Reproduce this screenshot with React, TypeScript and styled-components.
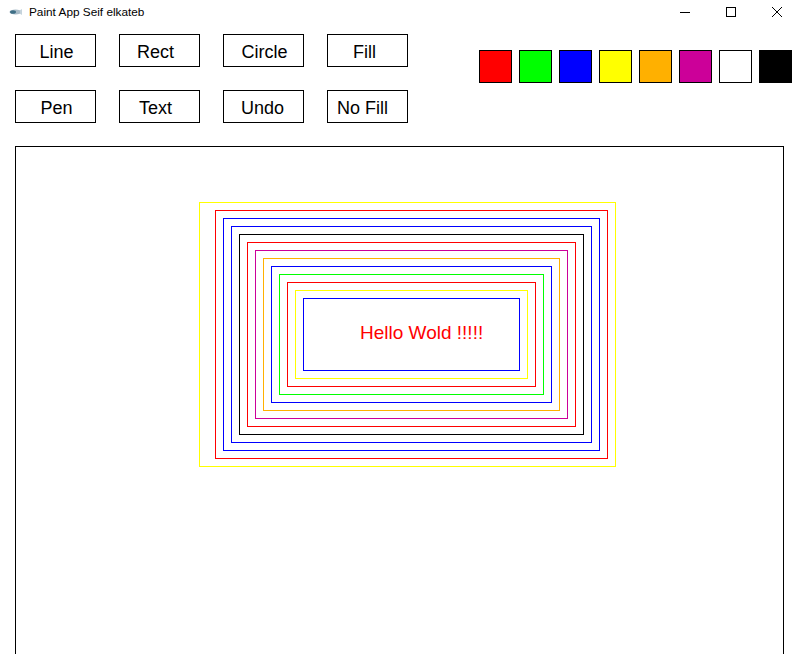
import React from "react";
import styled, { createGlobalStyle } from "styled-components";

const GlobalStyle = createGlobalStyle`
  html, body { margin: 0; padding: 0; background: #ffffff; }
  body { font-family: "Liberation Sans", Arial, sans-serif; }
`;

const Window = styled.div`
  width: 800px;
  height: 654px;
  display: flex;
  flex-direction: column;
  overflow: hidden;
  background: #ffffff;
`;

const TitleBar = styled.div`
  height: 24px;
  display: flex;
  align-items: center;
  flex-shrink: 0;
`;

const AppIcon = styled.svg`
  width: 14px;
  height: 8px;
  margin-left: 8px;
  margin-top: -1px;
`;

const Title = styled.span`
  margin-left: 7px;
  font-family: "Liberation Sans", Arial, sans-serif;
  font-size: 11.8px;
  color: #000000;
  flex: 1;
`;

const CaptionButton = styled.div`
  width: 46px;
  height: 24px;
  display: flex;
  align-items: center;
  justify-content: center;
`;

const Toolbar = styled.div`
  display: flex;
  justify-content: space-between;
  align-items: flex-start;
  padding: 10px 8px 0 15px;
  flex-shrink: 0;
`;

const ButtonGrid = styled.div`
  display: grid;
  grid-template-columns: repeat(4, 81px);
  grid-auto-rows: 33px;
  column-gap: 23px;
  row-gap: 23px;
`;

const ToolButton = styled.button<{ $shift: number }>`
  box-sizing: border-box;
  width: 81px;
  height: 33px;
  margin: 0;
  padding: 3px ${(p) => (p.$shift < 0 ? -p.$shift * 2 : 0)}px 0
    ${(p) => (p.$shift > 0 ? p.$shift * 2 : 0)}px;
  background: #ffffff;
  border: 1px solid #000000;
  border-radius: 0;
  font-family: "Liberation Sans", Arial, sans-serif;
  font-size: 18px;
  color: #000000;
  display: flex;
  align-items: center;
  justify-content: center;
`;

const Palette = styled.div`
  display: flex;
  gap: 7px;
  margin-top: 16px;
`;

const Swatch = styled.div<{ $color: string }>`
  box-sizing: border-box;
  width: 33px;
  height: 33px;
  background: ${(p) => p.$color};
  border: 1px solid #000000;
`;

const Canvas = styled.div`
  box-sizing: border-box;
  margin: 23px 16px 0 15px;
  height: 560px;
  border: 1px solid #000000;
  background: #ffffff;
  flex-shrink: 0;
`;

const Drawing = styled.svg`
  display: block;
  width: 767px;
  height: 558px;
`;

const tools: [string, number][] = [
  ["Line", 1],
  ["Rect", -4],
  ["Circle", 1],
  ["Fill", -3],
  ["Pen", 1],
  ["Text", -4],
  ["Undo", -1],
  ["No Fill", -5],
];
const colors = ["#ff0000", "#00ff00", "#0000ff", "#ffff00", "#ffb000", "#cc0099", "#ffffff", "#000000"];

// rectangles in screen coordinates: x1, y1, x2, y2, color
const rects: [number, number, number, number, string][] = [
  [199, 202, 615, 466, "#ffff00"],
  [215, 210, 607, 458, "#ff0000"],
  [223, 218, 599, 450, "#0000ff"],
  [231, 226, 591, 442, "#0000ff"],
  [239, 234, 583, 434, "#000000"],
  [247, 242, 575, 426, "#ff0000"],
  [255, 250, 567, 418, "#cc0099"],
  [263, 258, 559, 410, "#ffb000"],
  [271, 266, 551, 402, "#0000ff"],
  [279, 274, 543, 394, "#00ff00"],
  [287, 282, 535, 386, "#ff0000"],
  [295, 290, 527, 378, "#ffff00"],
  [303, 298, 519, 370, "#0000ff"],
];

const OX = 16;
const OY = 147;

export default function App() {
  return (
    <>
      <GlobalStyle />
      <Window>
        <TitleBar>
          <AppIcon viewBox="0 0 14 8">
            <ellipse cx="7.5" cy="4" rx="6" ry="2.6" fill="#a9bcc8" />
            <ellipse cx="5" cy="4" rx="3" ry="1.8" fill="#3f6f86" />
            <path d="M12 2.2 L14 1 L14 7 L12 5.8 Z" fill="#c5d3dc" />
          </AppIcon>
          <Title>Paint App Seif elkateb</Title>
          <CaptionButton>
            <svg width="10" height="10" viewBox="0 0 10 10">
              <line x1="0" y1="5.5" x2="10" y2="5.5" stroke="#000" strokeWidth="1" />
            </svg>
          </CaptionButton>
          <CaptionButton>
            <svg width="10" height="10" viewBox="0 0 10 10">
              <rect x="0.5" y="0.5" width="9" height="9" fill="none" stroke="#000" strokeWidth="1" />
            </svg>
          </CaptionButton>
          <CaptionButton>
            <svg width="10" height="10" viewBox="0 0 10 10">
              <path d="M0 0 L10 10 M10 0 L0 10" stroke="#000" strokeWidth="1" />
            </svg>
          </CaptionButton>
        </TitleBar>
        <Toolbar>
          <ButtonGrid>
            {tools.map(([t, s]) => (
              <ToolButton key={t} $shift={s}>
                {t}
              </ToolButton>
            ))}
          </ButtonGrid>
          <Palette>
            {colors.map((c) => (
              <Swatch key={c} $color={c} />
            ))}
          </Palette>
        </Toolbar>
        <Canvas>
          <Drawing viewBox="0 0 767 558">
            {rects.map(([x1, y1, x2, y2, c], i) => (
              <rect
                key={i}
                x={x1 - OX + 0.5}
                y={y1 - OY + 0.5}
                width={x2 - x1}
                height={y2 - y1}
                fill="none"
                stroke={c}
                strokeWidth={1}
                shapeRendering="crispEdges"
              />
            ))}
            <text
              x={360 - OX}
              y={339 - OY}
              fill="#ff0000"
              fontFamily="'Liberation Sans', Arial, sans-serif"
              fontSize="19"
            >
              Hello Wold !!!!!
            </text>
          </Drawing>
        </Canvas>
      </Window>
    </>
  );
}
